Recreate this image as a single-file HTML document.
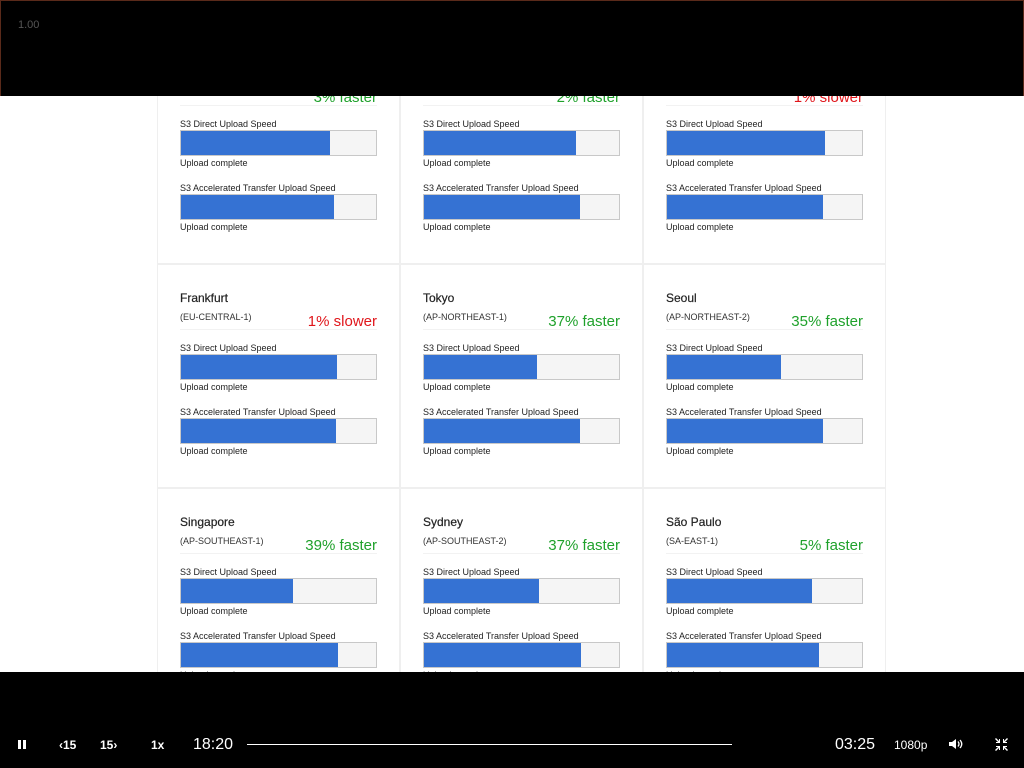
<!DOCTYPE html>
<html><head><meta charset="utf-8"><style>
*{margin:0;padding:0;box-sizing:border-box}
body{width:1024px;height:768px;overflow:hidden;background:#fff;font-family:"Liberation Sans",Arial,sans-serif;position:relative}
.card{position:absolute;width:243px;height:224px;border:1px solid #efefef;background:#fff}
.t{position:absolute;left:22px;top:26px;font-size:12px;color:#222;-webkit-text-stroke:0.2px #222}
.r{position:absolute;left:22px;top:47px;font-size:9px;color:#333}
.p{position:absolute;right:22px;top:48px;font-size:15px}
.g{color:#1fa12b}.red{color:#e0161b}
.sep{position:absolute;left:22px;right:22px;top:64px;height:1px;background:#f2f2f2}
.l{position:absolute;left:22px;font-size:9px;color:#222}
.bar{position:absolute;left:22px;width:197px;height:26px;border:1px solid #c8c8c8;background:#f5f5f5}
.bar i{display:block;height:100%;background:#3572d3}
.top{position:absolute;left:0;top:0;width:1024px;height:96px;background:#000;border:1px solid #5a2a1a;border-bottom:none}
.bot{position:absolute;left:0;top:672px;width:1024px;height:96px;background:#000}
.w{position:absolute;color:#fff;font-size:12px;font-weight:bold}
</style></head><body>
<div id="g"></div>
<div class="top"><div style="position:absolute;left:17px;top:18px;color:#555;font-size:11px">1.00</div></div>
<div class="bot">
<div style="position:absolute;left:18px;top:68px;width:3px;height:9px;background:#fff"></div>
<div style="position:absolute;left:23px;top:68px;width:3px;height:9px;background:#fff"></div>
<div class="w" style="left:59px;top:66px">&lsaquo;15</div>
<div class="w" style="left:100px;top:66px">15&rsaquo;</div>
<div class="w" style="left:151px;top:66px">1x</div>
<div style="position:absolute;left:193px;top:64px;color:#fff;font-size:16px">18:20</div>
<div style="position:absolute;left:247px;top:72px;width:485px;height:1px;background:#fff"></div>
<div style="position:absolute;left:835px;top:64px;color:#fff;font-size:16px">03:25</div>
<div style="position:absolute;left:894px;top:66px;color:#fff;font-size:12px">1080p</div>
<svg style="position:absolute;left:948px;top:66px" width="16" height="12" viewBox="0 0 16 12"><path d="M1 4h3l4-3v10l-4-3H1z" fill="#fff"/><path d="M10 3.5q2 2.5 0 5M12 2q3.5 4 0 8" stroke="#fff" fill="none" stroke-width="1.3"/></svg>
<svg style="position:absolute;left:995px;top:66px" width="13" height="13" viewBox="0 0 13 13" fill="#fff"><path d="M0 1l1-1 3 3V1h1v4H1V4h2zM13 1l-1-1-3 3V1H8v4h4V4h-2zM0 12l1 1 3-3v2h1V8H1v1h2zM13 12l-1 1-3-3v2H8V8h4v1h-2z"/></svg>
</div>
<script>
var d=[
["","","3% faster","g",149,153],["","","2% faster","g",152,156],["","","1% slower","red",158,156],
["Frankfurt","(EU-CENTRAL-1)","1% slower","red",156,155],["Tokyo","(AP-NORTHEAST-1)","37% faster","g",113,156],["Seoul","(AP-NORTHEAST-2)","35% faster","g",114,156],
["Singapore","(AP-SOUTHEAST-1)","39% faster","g",112,157],["Sydney","(AP-SOUTHEAST-2)","37% faster","g",115,157],["São Paulo","(SA-EAST-1)","5% faster","g",145,152]];
var h="";
d.forEach(function(c,i){var x=157+(i%3)*243,y=40+Math.floor(i/3)*224;
h+='<div class="card" style="left:'+x+'px;top:'+y+'px"><div class="t">'+c[0]+'</div><div class="r">'+c[1]+'</div><div class="p '+c[3]+'">'+c[2]+'</div><div class="sep"></div>'+
'<div class="l" style="top:78px">S3 Direct Upload Speed</div><div class="bar" style="top:89px"><i style="width:'+c[4]+'px"></i></div><div class="l" style="top:117px">Upload complete</div>'+
'<div class="l" style="top:142px">S3 Accelerated Transfer Upload Speed</div><div class="bar" style="top:153px"><i style="width:'+c[5]+'px"></i></div><div class="l" style="top:181px">Upload complete</div></div>';});
document.getElementById("g").innerHTML=h;
</script>
</body></html>
